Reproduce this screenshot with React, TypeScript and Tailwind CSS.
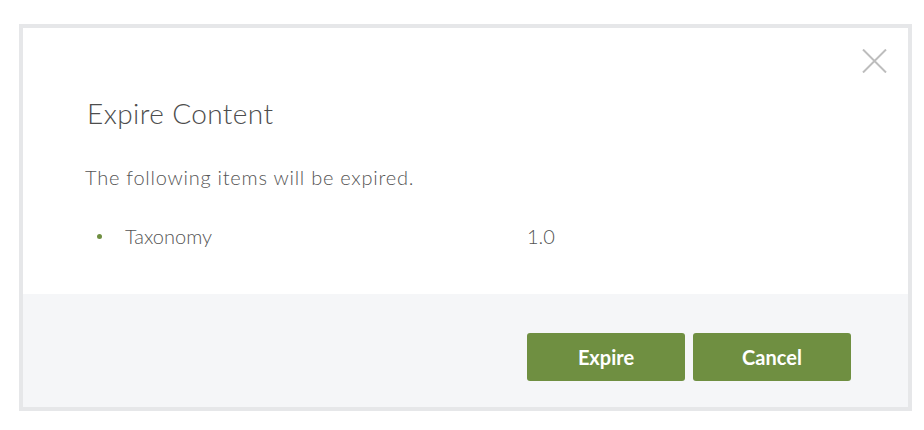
export default function App() {
  return (
    <div className="min-h-screen bg-white pl-[19px] pt-[24px] font-['Lato',_sans-serif]">
      <div className="w-[893px] h-[387px] border-4 border-[#e6e7e9] flex flex-col bg-white">
        <div className="relative flex-1 pt-[68px]">
          <button className="absolute right-[21px] top-[21px] w-[25px] h-[24px] text-[#bdbdbd]">
            <svg width="25" height="24" viewBox="0 0 25 24" fill="none" stroke="currentColor" strokeWidth="2">
              <path d="M1 0.5 L24 23.5 M24 0.5 L1 23.5" />
            </svg>
          </button>
          <h2 className="pl-[64px] text-[28px] leading-[34px] font-light tracking-[0.4px] text-[#4d4d4d]">Expire Content</h2>
          <p className="pl-[62px] mt-[35px] text-[20px] leading-[24px] font-light tracking-[0.75px] text-[#555]">
            The following items will be expired.
          </p>
          <ul className="mt-[35px] pl-[74px]">
            <li className="flex items-center text-[20px] leading-[24px] font-light text-[#555]">
              <span className="w-[5px] h-[5px] rounded-full bg-[#6f8f41]" />
              <span className="ml-[23px] w-[402px]">Taxonomy</span>
              <span>1.0</span>
            </li>
          </ul>
        </div>
        <div className="h-[113px] bg-[#f5f6f8] flex justify-end items-start gap-[8px] pt-[39px] pr-[57px]">
          <button className="w-[158px] h-[48px] rounded-[3px] bg-[#6f8f41] text-white text-[20px] font-bold">
            Expire
          </button>
          <button className="w-[158px] h-[48px] rounded-[3px] bg-[#6f8f41] text-white text-[20px] font-bold">
            Cancel
          </button>
        </div>
      </div>
    </div>
  );
}
